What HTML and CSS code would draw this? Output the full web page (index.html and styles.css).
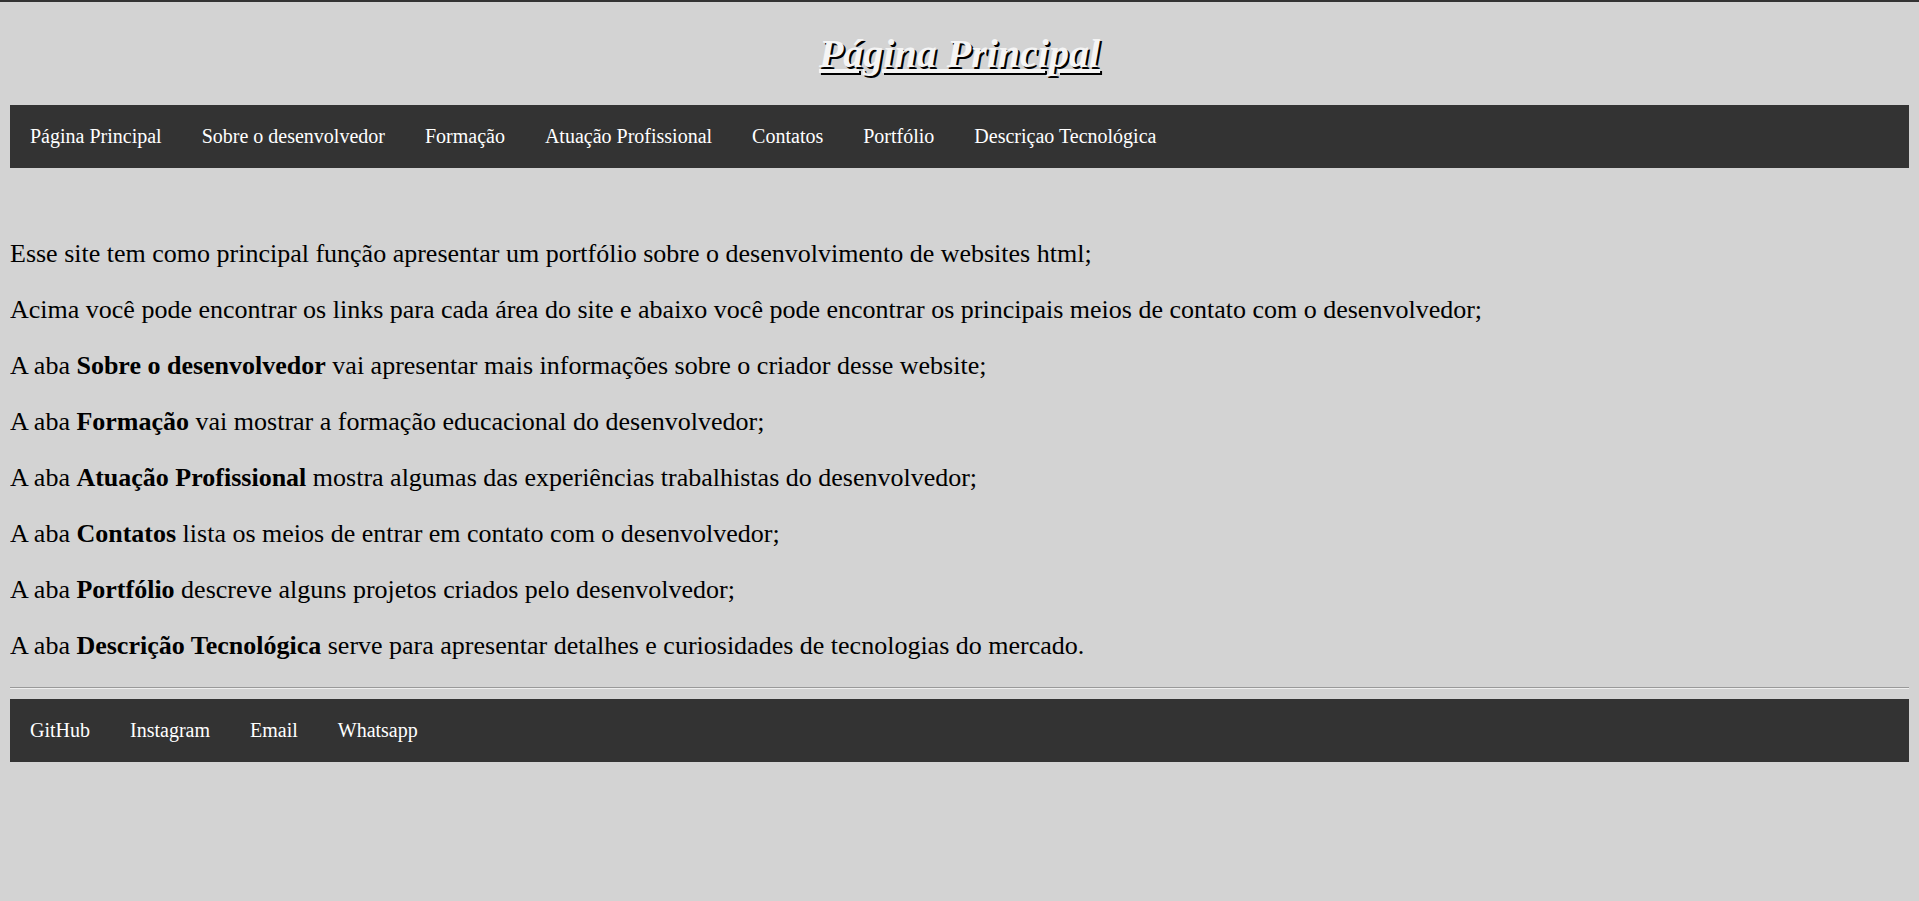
FILE: index.html
```html
<!DOCTYPE html>
<html lang="pt-BR">
<head>
<meta charset="utf-8">
<title>Página Principal</title>
<link rel="stylesheet" href="styles.css">
</head>
<body>
<header class="header">
  <h1 class="title">Página Principal</h1>
</header>
<nav class="menu">
  <a class="menu-link" href="#">Página Principal</a>
  <a class="menu-link" href="#">Sobre o desenvolvedor</a>
  <a class="menu-link" href="#">Formação</a>
  <a class="menu-link" href="#">Atuação Profissional</a>
  <a class="menu-link" href="#">Contatos</a>
  <a class="menu-link" href="#">Portfólio</a>
  <a class="menu-link" href="#">Descriçao Tecnológica</a>
</nav>
<main class="content">
  <p class="text">Esse site tem como principal função apresentar um portfólio sobre o desenvolvimento de websites html;</p>
  <p class="text">Acima você pode encontrar os links para cada área do site e abaixo você pode encontrar os principais meios de contato com o desenvolvedor;</p>
  <p class="text">A aba <b>Sobre o desenvolvedor</b> vai apresentar mais informações sobre o criador desse website;</p>
  <p class="text">A aba <b>Formação</b> vai mostrar a formação educacional do desenvolvedor;</p>
  <p class="text">A aba <b>Atuação Profissional</b> mostra algumas das experiências trabalhistas do desenvolvedor;</p>
  <p class="text">A aba <b>Contatos</b> lista os meios de entrar em contato com o desenvolvedor;</p>
  <p class="text">A aba <b>Portfólio</b> descreve alguns projetos criados pelo desenvolvedor;</p>
  <p class="text">A aba <b>Descrição Tecnológica</b> serve para apresentar detalhes e curiosidades de tecnologias do mercado.</p>
</main>
<hr class="divider">
<footer class="menu">
  <a class="menu-link" href="#">GitHub</a>
  <a class="menu-link" href="#">Instagram</a>
  <a class="menu-link" href="#">Email</a>
  <a class="menu-link" href="#">Whatsapp</a>
</footer>
</body>
</html>
```
FILE: styles.css
```css
html {
  background: #d3d3d3;
  border-top: 2px solid #333;
}

body {
  margin: 0 10px 10px;
  font-family: "Liberation Serif", "Times New Roman", serif;
  color: #000;
}

.header {
  padding-top: 28px;
  padding-bottom: 28px;
  text-align: center;
}

.title {
  margin: 0;
  font-size: 40px;
  font-weight: bold;
  font-style: italic;
  color: #f5f5f5;
  text-decoration: underline;
  text-shadow: 2px 2px 0 #000;
}

.menu {
  display: flex;
  background: #333;
}

.menu-link {
  display: block;
  padding: 20px;
  font-size: 20px;
  color: #fff;
  text-decoration: none;
}

.content {
  padding-top: 45px;
}

.text {
  margin: 26px 0;
  font-size: 26px;
}

.divider {
  margin: 0 0 10px;
  border: 0;
  border-top: 1px solid #999;
  border-bottom: 1px solid #eee;
  height: 0;
}
```
